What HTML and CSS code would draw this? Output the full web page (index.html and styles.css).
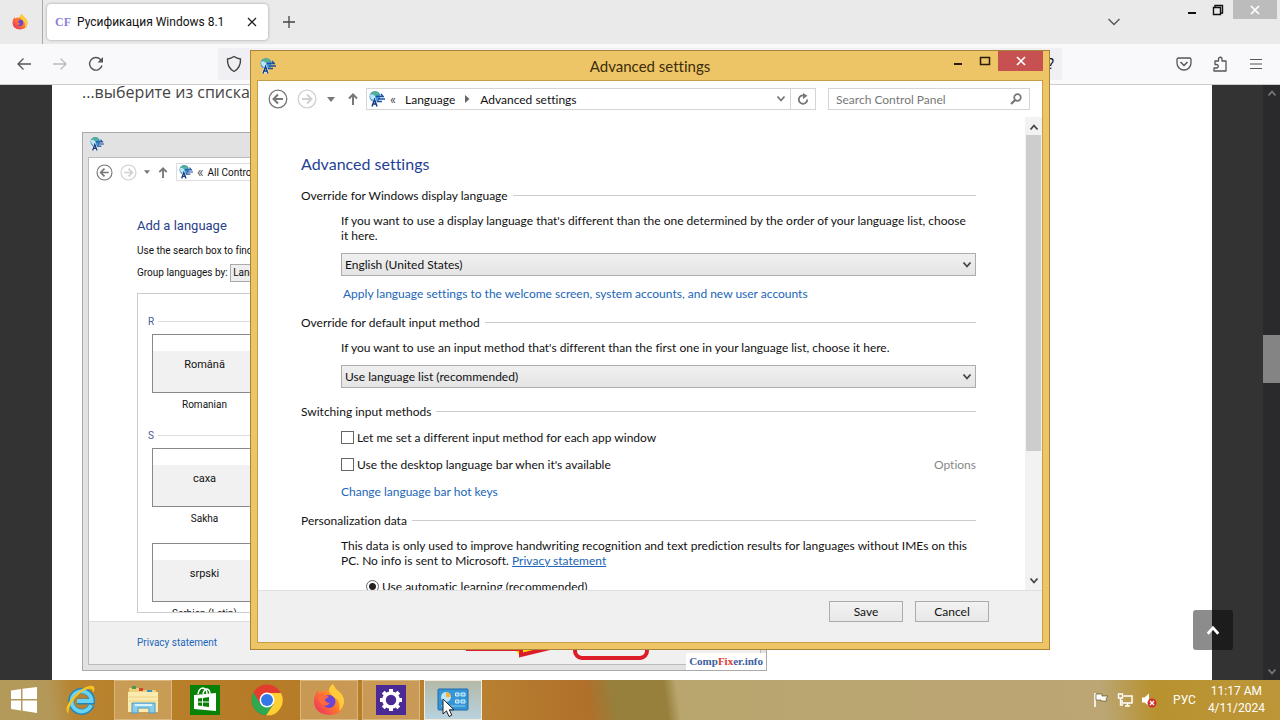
FILE: index.html
```html
<!DOCTYPE html>
<html lang="en">
<head>
  <meta charset="UTF-8">
  <title>Advanced settings</title>
  <link rel="stylesheet" href="styles.css">
</head>
<body>
  <!-- shared icons -->
  <svg class="sprite" aria-hidden="true">
    <symbol id="i-lang" viewBox="0 0 16 16">
      <circle cx="6" cy="5.500" r="5.500" fill="#3d9bd6"/>
      <path d="M2 2Q5 -.5 9 1L10 3 6 5 4 4Z" fill="#56b08c"/>
      <path d="M1 4Q3 2 6 5L4 9Q1 8 1 4Z" fill="#b9e6fb"/>
      <path d="M7 5.500h8M9 8h7M8 10.500h5M12 3l2 2.500" stroke="#1f4fa0" stroke-width="1.300" fill="none"/>
      <path d="M3 15.500L5.500 8.500L8 15.500M3.500 13H7.500" stroke="#fff" stroke-width="2.600" fill="none"/>
      <path d="M3 15.500L5.500 8.500L8 15.500M3.500 13H7.500" stroke="#163c7c" stroke-width="1.500" fill="none"/>
    </symbol>
    <symbol id="i-back" viewBox="0 0 20 20">
      <circle cx="10" cy="10" r="8.800" fill="none" stroke="currentColor" stroke-width="1.300"/>
      <path d="M15 10H6M10 5.500L5.500 10L10 14.500" fill="none" stroke="currentColor" stroke-width="2"/>
    </symbol>
    <symbol id="i-fwd" viewBox="0 0 20 20">
      <circle cx="10" cy="10" r="8.800" fill="none" stroke="currentColor" stroke-width="1.300"/>
      <path d="M5 10H14M10 5.500L14.500 10L10 14.500" fill="none" stroke="currentColor" stroke-width="2"/>
    </symbol>
    <symbol id="i-up" viewBox="0 0 12 14">
      <path d="M6 13V3M2 6.500L6 2.500L10 6.500" fill="none" stroke="currentColor" stroke-width="2"/>
    </symbol>
    <symbol id="i-drop" viewBox="0 0 8 5"><path d="M0 0H8L4 5Z" fill="currentColor"/></symbol>
    <symbol id="i-chev" viewBox="0 0 10 8"><path d="M1.500 1.500L5 5.500L8.500 1.500" fill="none" stroke="currentColor" stroke-width="1.800"/></symbol>
    <symbol id="i-chev-up" viewBox="0 0 10 8"><path d="M1.500 6.500L5 2.500L8.500 6.500" fill="none" stroke="currentColor" stroke-width="1.800"/></symbol>
    <symbol id="i-firefox" viewBox="0 0 32 32">
      <path d="M20 0Q22 4 24 6Q31 11 31 18Q30 31 16 31Q2 30 1 18Q1 11 5 6L6 9Q10 6 15 7Q16 3 20 0Z" fill="url(#ffg)"/>
      <path d="M20 0Q22 4 24 6Q31 11 31 18Q30 24 26 27Q28 20 24 15Q18 12 16 7Q16 3 20 0Z" fill="#ffcb3a"/>
      <circle cx="16" cy="17.500" r="6.500" fill="#6a46d6"/>
      <path d="M5 10Q10 9 16 13L12 15Q12 19 17 19Q13 24 8 20Q5 16 5 10Z" fill="#ff6a3a"/>
    </symbol>
    <linearGradient id="ffg" x1="1" y1="0" x2="0" y2="1">
      <stop offset="0" stop-color="#ffd43b"/><stop offset=".45" stop-color="#ff8427"/><stop offset="1" stop-color="#ee2468"/>
    </linearGradient>
  </svg>

  <div class="desktop">
    <div class="browser">
      <header class="tabbar">
        <button class="pinned" aria-label="Firefox View"><svg width="16" height="16"><use href="#i-firefox"/></svg></button>
        <div class="tab">
          <span class="favicon">CF</span>
          <span class="tab-title">Русификация Windows 8.1</span>
          <button class="tab-close" aria-label="Close tab"><svg width="10" height="10" viewBox="0 0 10 10"><path d="M1 1L9 9M9 1L1 9" stroke="#222" stroke-width="1.300"/></svg></button>
        </div>
        <button class="new-tab" aria-label="New tab"><svg width="12" height="12" viewBox="0 0 12 12"><path d="M6 0V12M0 6H12" stroke="#444" stroke-width="1.300"/></svg></button>
        <button class="all-tabs" aria-label="List all tabs"><svg width="14" height="8" viewBox="0 0 14 8"><path d="M1.500 1L7 6.500L12.500 1" fill="none" stroke="#555" stroke-width="1.400"/></svg></button>
        <div class="window-buttons">
          <button aria-label="Minimize"><svg width="10" height="12" viewBox="0 0 10 12"><path d="M1 9H9" stroke="#111" stroke-width="2"/></svg></button>
          <button aria-label="Restore"><svg width="12" height="12" viewBox="0 0 12 12"><path d="M3 3V1.500H10.500V9H9M1.500 3.500H8.500V10.500H1.500Z" fill="none" stroke="#111" stroke-width="1.400"/></svg></button>
          <button class="close" aria-label="Close"><svg width="10" height="10" viewBox="0 0 10 10"><path d="M1 1L9 9M9 1L1 9" stroke="#fff" stroke-width="1.700"/></svg></button>
        </div>
      </header>
      <nav class="toolbar">
        <button aria-label="Back"><svg width="16" height="14" viewBox="0 0 16 14"><path d="M15 7H2M7.500 1.500L2 7L7.500 12.500" fill="none" stroke="#555" stroke-width="1.300"/></svg></button>
        <button aria-label="Forward"><svg width="16" height="14" viewBox="0 0 16 14"><path d="M1 7H14M8.500 1.500L14 7L8.500 12.500" fill="none" stroke="#bbb" stroke-width="1.300"/></svg></button>
        <button aria-label="Reload"><svg width="16" height="16" viewBox="0 0 16 16"><path d="M14 9.500A6.300 6.300 0 1 1 12.500 3.500L14 5" fill="none" stroke="#555" stroke-width="1.400"/><path d="M15 1V6.500H9.500Z" fill="#555"/></svg></button>
        <div class="urlbar">
          <svg width="16" height="18" viewBox="0 0 16 18"><path d="M8 1.500Q11 3.500 14.500 4Q15 12.500 8 16.500Q1 12.500 1.500 4Q5 3.500 8 1.500Z" fill="none" stroke="#444" stroke-width="1.400"/></svg>
          <span>?</span>
        </div>
        <button aria-label="Pocket"><svg width="16" height="16" viewBox="0 0 16 16"><path d="M2.500 2H13.500Q15 2 15 3.500V7A7 7 0 0 1 1 7V3.500Q1 2 2.500 2Z" fill="none" stroke="#555" stroke-width="1.300"/><path d="M4.500 6L8 9.500L11.500 6" fill="none" stroke="#555" stroke-width="1.500"/></svg></button>
        <button aria-label="Extensions"><svg width="16" height="16" viewBox="0 0 16 16"><path d="M3 5H6.500V3A1.700 1.700 0 0 1 10 3V5H14V15H2V12H4.500A1.700 1.700 0 0 0 4.500 8.500H3Z" fill="none" stroke="#555" stroke-width="1.300" stroke-linejoin="round"/></svg></button>
        <button aria-label="Menu"><svg width="14" height="12" viewBox="0 0 14 12"><path d="M1 1.500H13M1 6H13M1 10.500H13" stroke="#555" stroke-width="1.200"/></svg></button>
      </nav>

      <div class="viewport">
        <main class="article">
          <p>...выберите из списка</p>
          <div class="shot">
            <div class="shot-title"><svg width="14" height="14"><use href="#i-lang"/></svg></div>
            <div class="shot-window">
              <div class="shot-nav">
                <svg class="dark" width="17" height="17"><use href="#i-back"/></svg>
                <svg class="light" width="17" height="17"><use href="#i-fwd"/></svg>
                <svg class="mid" width="6" height="4"><use href="#i-drop"/></svg>
                <svg class="mid" width="12" height="13"><use href="#i-up"/></svg>
                <div class="shot-path"><svg width="14" height="14"><use href="#i-lang"/></svg><span class="guil">«</span>All Control Panel Items</div>
              </div>
              <div class="shot-body">
                <h2>Add a language</h2>
                <p>Use the search box to find</p>
                <p>Group languages by: <span class="shot-select">Language</span></p>
                <div class="lang-list">
                  <div class="group">R</div>
                  <div class="tile">Română</div>
                  <div class="caption">Romanian</div>
                  <div class="group">S</div>
                  <div class="tile">саха</div>
                  <div class="caption">Sakha</div>
                  <div class="tile">srpski</div>
                  <div class="caption">Serbian (Latin)</div>
                </div>
              </div>
              <div class="shot-foot"><a href="#">Privacy statement</a></div>
            </div>
            <svg class="marks" width="190" height="20" viewBox="0 0 190 20">
              <path d="M44 -4H92L55 6Z" fill="#ffe000"/>
              <path d="M0 -1H55V5L88 -3" fill="none" stroke="#dc1d28" stroke-width="4"/>
              <rect x="109" y="-22" width="72" height="30" rx="7" fill="none" stroke="#dc1d28" stroke-width="4"/>
            </svg>
            <div class="watermark">Comp<b>Fix</b>er.info</div>
          </div>
        </main>
        <div class="page-scroll">
          <svg width="10" height="8"><use href="#i-chev-up"/></svg>
          <div class="page-thumb"></div>
          <svg width="10" height="8"><use href="#i-chev"/></svg>
        </div>
        <button class="to-top" aria-label="Back to top"><svg width="16" height="12"><use href="#i-chev-up"/></svg></button>
      </div>
    </div>

    <section class="dialog">
      <header class="dialog-title">
        <svg width="16" height="16"><use href="#i-lang"/></svg>
        <h1>Advanced settings</h1>
        <div class="dialog-buttons">
          <button aria-label="Minimize"><svg width="10" height="12" viewBox="0 0 10 12"><path d="M1 9H9" stroke="#2b1c05" stroke-width="2"/></svg></button>
          <button aria-label="Maximize"><svg width="12" height="12" viewBox="0 0 12 12"><path d="M1 2.500H11M1.500 2V9.500H10.500V2" fill="none" stroke="#2b1c05" stroke-width="1.500"/></svg></button>
          <button class="close" aria-label="Close"><svg width="10" height="10" viewBox="0 0 10 10"><path d="M1 1L9 9M9 1L1 9" stroke="#fff" stroke-width="1.700"/></svg></button>
        </div>
      </header>
      <div class="dialog-frame">
        <div class="dialog-nav">
          <button class="dark" aria-label="Back"><svg width="20" height="20"><use href="#i-back"/></svg></button>
          <button class="light" aria-label="Forward"><svg width="20" height="20"><use href="#i-fwd"/></svg></button>
          <button class="mid drop" aria-label="Recent"><svg width="8" height="5"><use href="#i-drop"/></svg></button>
          <button class="mid" aria-label="Up"><svg width="12" height="14"><use href="#i-up"/></svg></button>
          <div class="path">
            <svg width="16" height="16"><use href="#i-lang"/></svg>
            <span class="guil">«</span>
            <a href="#">Language</a>
            <svg class="sep" width="5" height="8" viewBox="0 0 5 8"><path d="M0 0L4.500 4L0 8Z" fill="#666"/></svg>
            <a href="#">Advanced settings</a>
            <svg class="path-drop mid" width="10" height="8"><use href="#i-chev"/></svg>
            <button class="refresh" aria-label="Refresh"><svg width="12" height="12" viewBox="0 0 12 12"><path d="M7 2.500A4.200 4.200 0 1 0 10.200 6.500" fill="none" stroke="#777" stroke-width="1.800"/><path d="M6 0L10.500 2.800L6 6Z" fill="#777"/></svg></button>
          </div>
          <label class="search">
            <input type="text" placeholder="Search Control Panel" aria-label="Search Control Panel">
            <svg width="12" height="12" viewBox="0 0 12 12"><circle cx="7.500" cy="4.500" r="3.300" fill="none" stroke="#777" stroke-width="1.700"/><path d="M5.300 6.900L1 11" stroke="#777" stroke-width="2.200"/></svg>
          </label>
        </div>
        <div class="dialog-scroll">
          <form class="settings">
            <h2>Advanced settings</h2>
            <h3>Override for Windows display language</h3>
            <p>If you want to use a display language that's different than the one determined by the order of your language list, choose it here.</p>
            <div class="select">
              <select aria-label="Display language"><option>English (United States)</option></select>
              <svg width="10" height="8"><use href="#i-chev"/></svg>
            </div>
            <a class="apply" href="#">Apply language settings to the welcome screen, system accounts, and new user accounts</a>
            <h3>Override for default input method</h3>
            <p>If you want to use an input method that's different than the first one in your language list, choose it here.</p>
            <div class="select">
              <select aria-label="Input method"><option>Use language list (recommended)</option></select>
              <svg width="10" height="8"><use href="#i-chev"/></svg>
            </div>
            <h3 class="switching">Switching input methods</h3>
            <div class="row"><label><input type="checkbox">Let me set a different input method for each app window</label></div>
            <div class="row"><label><input type="checkbox">Use the desktop language bar when it's available</label><span class="disabled">Options</span></div>
            <div class="row"><a href="#">Change language bar hot keys</a></div>
            <h3>Personalization data</h3>
            <p>This data is only used to improve handwriting recognition and text prediction results for languages without IMEs on this PC. No info is sent to Microsoft. <a class="under" href="#">Privacy statement</a></p>
            <div class="row radio"><label><input type="radio" checked>Use automatic learning (recommended)</label></div>
          </form>
          <div class="scrollbar">
            <svg width="10" height="8"><use href="#i-chev-up"/></svg>
            <div class="thumb"></div>
            <svg width="10" height="8"><use href="#i-chev"/></svg>
          </div>
        </div>
        <footer class="dialog-foot">
          <button>Save</button>
          <button>Cancel</button>
        </footer>
      </div>
    </section>

    <footer class="taskbar">
      <button class="task start" aria-label="Start"><svg width="28" height="28" viewBox="0 0 28 28"><path d="M1 4.500L11 3V13H1ZM12.500 2.800L27 1V13H12.500ZM1 14.500H11V24.500L1 23ZM12.500 14.500H27V27L12.500 24.800Z" fill="#fff"/></svg></button>
      <button class="task" aria-label="Internet Explorer"><svg width="32" height="32" viewBox="0 0 32 32">
        <path d="M26.500 21A10.500 10.500 0 1 1 27 15.500V17.500H12" fill="none" stroke="#2386b8" stroke-width="6"/>
        <path d="M26 21A10 10 0 1 1 26.500 15.500V17H12" fill="none" stroke="#69d3f3" stroke-width="4"/>
        <path d="M4 30Q-3 25 9 12Q21 0 28 2Q31 4 28 9Q28 4 23 5Q15 7 8 17Q2 26 4 30Z" fill="#f6c321"/>
      </svg></button>
      <button class="task open" aria-label="File Explorer"><svg width="32" height="32" viewBox="0 0 32 32">
        <path d="M2 4H12L14 6H29V26H2Z" fill="#edd078"/><path d="M5 2H9V5H5Z" fill="#459a55"/><path d="M12 4H16V7H12Z" fill="#d9442b"/><path d="M20 6H25V8H20Z" fill="#3c91cc"/>
        <path d="M1 8H31V28H1Z" fill="#fbebaf"/><path d="M2 13H30M2 17H30" stroke="#ead27f"/>
        <path d="M5 29V19H28V29H22V24H11V29Z" fill="#8ccbea" stroke="#4a9cc8"/><path d="M8 21H25" stroke="#d9f2fc" stroke-width="2"/>
      </svg></button>
      <button class="task" aria-label="Store"><svg width="30" height="30" viewBox="0 0 30 30">
        <path d="M0 0H30V30H0Z" fill="#078207"/><path d="M4 10L26 8V26L4 24Z" fill="#fff"/><path d="M8 9Q9 3 13 3Q17 4 17 9M13 9Q14 4 17 4Q20 5 20 9" fill="none" stroke="#fff" stroke-width="1.500"/>
        <path d="M8 13.500L12 13V16.500H8ZM13 12.900L19 12V16.500H13ZM8 17.500H12V21L8 20.600ZM13 17.500H19V22L13 21.200Z" fill="#078207"/>
      </svg></button>
      <button class="task" aria-label="Chrome"><svg width="32" height="32" viewBox="0 0 32 32">
        <circle cx="16" cy="16" r="15.500" fill="#e33b2e"/><path d="M2.600 8.300A15.500 15.500 0 0 0 15 31.500L22.700 19.900L16 16L9.300 19.900Z" fill="#2da94f"/><path d="M15 31.500A15.500 15.500 0 0 0 30 9H16L22.700 19.900Z" fill="#fdd033"/>
        <circle cx="16" cy="16" r="7.500" fill="#fff"/><circle cx="16" cy="16" r="6" fill="#3478e8"/>
      </svg></button>
      <button class="task open" aria-label="Firefox"><svg width="32" height="32"><use href="#i-firefox"/></svg></button>
      <button class="task open" aria-label="Settings"><svg width="30" height="30" viewBox="0 0 30 30">
        <path d="M0 0H30V30H0Z" fill="#4b2a96"/><circle cx="15" cy="15" r="7" fill="none" stroke="#fff" stroke-width="3.600"/>
        <path d="M15 4V8M15 22V26M4 15H8M22 15H26M7.200 7.200L10 10M20 20L22.800 22.800M22.800 7.200L20 10M10 20L7.200 22.800" stroke="#fff" stroke-width="4"/>
      </svg></button>
      <button class="task active" aria-label="Control Panel"><svg width="32" height="26" viewBox="0 0 32 26">
        <rect x="1" y="2" width="30" height="21" rx="1" fill="#3595d5" stroke="#1c6caa"/>
        <circle cx="9" cy="10" r="5" fill="#bfe4f7"/><path d="M9 10V5A5 5 0 0 1 14 10Z" fill="#f3b63c"/>
        <path d="M18.500 6H22V9H18.500ZM24 6H28V9H24ZM18.500 13H22V16H18.500ZM24 13H28V16H24Z" fill="#5bb4e8" stroke="#d9f0fc"/>
        <path d="M4 19H28" stroke="#8ccdf0" stroke-width="1"/>
      </svg></button>
      <div class="tray">
        <svg width="16" height="16" viewBox="0 0 16 16"><path d="M2 1V15" stroke="#fff" stroke-width="1.600"/><path d="M3 2H9V4H15L13 6.500L14 9H8V8H3Z" fill="#fff" stroke="#554016" stroke-width=".6"/></svg>
        <svg width="16" height="16" viewBox="0 0 16 16"><path d="M6.500 4H15V11H5V8M8 14H13M10.500 11V14" fill="none" stroke="#fff" stroke-width="1.500"/><path d="M1.500 2H5.500V6H1.500ZM3.500 6V13H6" fill="none" stroke="#fff" stroke-width="1.400"/></svg>
        <svg width="16" height="16" viewBox="0 0 16 16"><path d="M1 5.500H3.500L8 1.500V14L3.500 10.500H1Z" fill="#fff"/><circle cx="11" cy="11" r="4.500" fill="#d22f2f"/><path d="M9 9L13 13M13 9L9 13" stroke="#fff" stroke-width="1.400"/></svg>
        <span class="lang">РУС</span>
        <span class="clock">11:17 AM<br>4/11/2024</span>
      </div>
    </footer>

    <svg class="cursor" width="14" height="20" viewBox="0 0 14 20"><path d="M1 1V16L4.500 12.800L7 18.500L9.800 17.200L7.300 11.800H12Z" fill="#fff" stroke="#222"/></svg>
  </div>
</body>
</html>
```
FILE: styles.css
```css
* {
  box-sizing: border-box;
}
body {
  margin: 0;
  font-family: Roboto, "Open Sans", sans-serif;
  font-size: 12px;
  font-variant-ligatures: none;
  color: #111;
}
h1, h2, h3, p {
  margin: 0;
  font-weight: normal;
}
button {
  border: 0;
  padding: 0;
  background: none;
  font: inherit;
  color: inherit;
  display: flex;
  align-items: center;
  justify-content: center;
}
a {
  color: #2166b8;
  text-decoration: none;
}
svg {
  flex: none;
  display: block;
}
.sprite {
  position: absolute;
  width: 0;
  height: 0;
}
.dark {
  color: #777;
}
.mid {
  color: #777;
}
.light {
  color: #d0d0d0;
}

.desktop {
  position: relative;
  display: flex;
  flex-direction: column;
  height: 100vh;
  overflow: hidden;
}
.browser {
  flex: 1;
  min-height: 0;
  display: flex;
  flex-direction: column;
}

/* browser chrome */
.tabbar {
  display: flex;
  height: 44px;
  background: #eaeaea;
}
.pinned {
  width: 43px;
  padding-right: 3px;
  border-right: 1px solid #aaa;
}
.tab {
  display: flex;
  align-items: center;
  width: 221px;
  margin: 4px 0 4px 4px;
  padding: 0 11px 0 8px;
  border-radius: 4px;
  background: #fff;
  box-shadow: 0 0 3px #999;
}
.favicon {
  width: 22px;
  font-family: "Liberation Serif", serif;
  font-weight: bold;
  color: #8a83dc;
}
.tab-title {
  flex: 1;
  white-space: nowrap;
}
.new-tab {
  width: 42px;
}
.all-tabs {
  width: 40px;
  margin-left: auto;
}
.window-buttons {
  display: flex;
  align-items: flex-start;
  margin-left: 45px;
}
.window-buttons button {
  width: 26px;
  height: 19px;
}
.window-buttons .close {
  width: 44px;
  margin: 0 3px 0 2px;
  background: #bcbcbc;
}
.toolbar {
  display: flex;
  align-items: center;
  height: 41px;
  padding: 0 6px;
  background: #f9f9fb;
  border-bottom: 1px solid #ccc;
}
.toolbar button {
  width: 36px;
  height: 32px;
}
.urlbar {
  flex: 1;
  display: flex;
  align-items: center;
  justify-content: space-between;
  height: 32px;
  margin: 0 104px;
  padding: 0 8px;
  background: #f0f0f4;
  font-size: 14px;
}

/* web page */
.viewport {
  position: relative;
  flex: 1;
  min-height: 0;
  display: flex;
  overflow: hidden;
  background: #333;
}
.article {
  flex: 1;
  margin: 0 51px 0 52px;
  padding: 0 30px;
  background: #fff;
}
.article > p {
  height: 47px;
  font-family: "Open Sans", sans-serif;
  font-size: 16px;
  line-height: 14px;
  color: #444;
}
.shot {
  position: relative;
  width: 685px;
  height: 539px;
  padding: 0 5px 5px;
  border: 1px solid #aaa;
  background: #e2e2e2;
  display: flex;
  flex-direction: column;
  font-size: 10px;
}
.shot-title {
  height: 24px;
  padding: 4px 2px;
}
.shot-window {
  flex: 1;
  min-height: 0;
  display: flex;
  flex-direction: column;
  border: 1px solid #bbb;
  background: #fff;
}
.shot-nav {
  display: flex;
  align-items: center;
  gap: 7px;
  padding: 5px 7px;
}
.shot-path {
  flex: 1;
  display: flex;
  align-items: center;
  gap: 4px;
  height: 18px;
  padding: 0 2px;
  border: 1px solid #ddd;
}
.guil {
  color: #555;
  font-size: 14px;
  line-height: 14px;
}
.shot-body {
  flex: 1;
  min-height: 0;
  display: flex;
  flex-direction: column;
  padding: 31px 48px 8px;
}
.shot-body h2 {
  font-size: 13px;
  line-height: 18px;
  margin-bottom: 5px;
  color: #27408b;
}
.shot-body p {
  line-height: 22px;
}
.shot-select {
  display: inline-block;
  line-height: 16px;
  padding: 0 2px;
  border: 1px solid #aaa;
  background: #eee;
}
.lang-list {
  flex: 1;
  min-height: 0;
  margin-top: 9px;
  padding: 17px 10px 0;
  border: 1px solid #ccc;
  overflow: hidden;
}
.group {
  display: flex;
  align-items: center;
  gap: 4px;
  height: 20px;
  margin-bottom: 3px;
  color: #4a5a9a;
}
.group::after {
  content: "";
  flex: 1;
  border-top: 1px solid #ddd;
}
.tile {
  width: 105px;
  height: 59px;
  margin-left: 4px;
  border: 1px solid #888;
  background: linear-gradient(#fff 28%, #f1f1f1 29%);
  line-height: 60px;
  text-align: center;
  font-size: 11px;
}
.caption {
  width: 105px;
  height: 36px;
  margin-left: 4px;
  line-height: 23px;
  text-align: center;
}
.caption + .group {
  margin-top: -4px;
}
.shot-foot {
  height: 43px;
  padding: 15px 48px;
  border-top: 1px solid #ddd;
  background: #f0f0f0;
}
.marks {
  position: absolute;
  left: 383px;
  bottom: 0;
}
.watermark {
  position: absolute;
  right: 0;
  bottom: 0;
  padding: 0 3px;
  background: #fff;
  font-family: "Liberation Serif", serif;
  font-weight: bold;
  font-size: 11px;
  line-height: 17px;
  color: #3d5f9f;
}
.watermark b {
  color: #e0392f;
}
.page-scroll {
  width: 17px;
  display: flex;
  flex-direction: column;
  align-items: center;
  padding: 4px 0;
  background: #2a2a2c;
  color: #777;
}
.page-thumb {
  width: 17px;
  height: 48px;
  margin: 238px 0 auto;
  background: #848484;
}
.to-top {
  position: absolute;
  right: 47px;
  bottom: 30px;
  width: 40px;
  height: 40px;
  border-radius: 3px;
  background: rgba(0, 0, 0, 0.45);
  color: #fff;
}

/* dialog window */
.dialog {
  position: absolute;
  left: 250px;
  top: 50px;
  width: 800px;
  height: 600px;
  display: flex;
  flex-direction: column;
  padding: 0 6px 6px;
  border: 1px solid #a8833a;
  background: #edc566;
  font-family: Lato, "Open Sans", sans-serif;
}
.dialog-title {
  position: relative;
  display: flex;
  align-items: center;
  height: 29px;
  padding-left: 3px;
}
.dialog-title h1 {
  flex: 1;
  margin-right: 19px;
  text-align: center;
  font-size: 15px;
  color: #3c2c0c;
}
.dialog-buttons {
  position: absolute;
  top: 0;
  right: 0;
  display: flex;
}
.dialog-buttons button {
  width: 27px;
  height: 20px;
}
.dialog-buttons .close {
  width: 45px;
  background: #c75050;
}
.dialog-frame {
  flex: 1;
  min-height: 0;
  display: flex;
  flex-direction: column;
  border: 1px solid #c79d48;
  background: #fff;
}
.dialog-nav {
  display: flex;
  align-items: center;
  height: 36px;
  padding: 0 12px 0 10px;
}
.dialog-nav > button {
  margin-right: 9px;
}
.dialog-nav > .drop {
  margin: 0 12px 0 1px;
}
.dialog-nav > .path {
  margin-left: -2px;
}
.path {
  flex: 1;
  display: flex;
  align-items: center;
  height: 22px;
  padding-left: 2px;
  border: 1px solid #d5d5d5;
}
.path a {
  color: #111;
}
.path .guil {
  margin: 0 9px 0 5px;
}
.sep {
  margin: 0 10px;
}
.path-drop {
  margin-left: auto;
}
.refresh {
  width: 25px;
  height: 20px;
  margin-left: 4px;
  border-left: 1px solid #d5d5d5;
}
.search {
  display: flex;
  align-items: center;
  width: 202px;
  height: 22px;
  margin-left: 12px;
  padding: 0 7px;
  border: 1px solid #d5d5d5;
}
.search input {
  flex: 1;
  min-width: 0;
  border: 0;
  padding: 0;
  font: inherit;
}
.search input::placeholder {
  color: #777;
}
.dialog-scroll {
  flex: 1;
  min-height: 0;
  display: flex;
  overflow: hidden;
}
.settings {
  flex: 1;
  padding: 36px 49px 0 43px;
}
.settings h2 {
  margin-bottom: 12px;
  font-size: 16px;
  line-height: 22px;
  color: #1f3f94;
}
.settings h3 {
  display: flex;
  align-items: center;
  gap: 5px;
  height: 16px;
  margin-bottom: 10px;
  font-size: 12px;
}
.settings h3::after {
  content: "";
  flex: 1;
  border-top: 1px solid #ccc;
}
.settings p {
  margin-left: 40px;
  padding-right: 2px;
  line-height: 15px;
}
.select {
  position: relative;
  margin: 10px 0 9px 40px;
}
.select select {
  appearance: none;
  display: block;
  width: 100%;
  height: 23px;
  padding: 0 3px;
  border: 1px solid #acacac;
  border-radius: 0;
  background: linear-gradient(#f0f0f0, #e4e4e4);
  font: inherit;
  color: #111;
}
.select svg {
  position: absolute;
  right: 4px;
  top: 8px;
  color: #444;
}
.apply {
  display: block;
  margin: 0 0 12px 42px;
  line-height: 17px;
}
.settings .switching {
  margin-top: 15px;
}
.row {
  display: flex;
  align-items: center;
  height: 17px;
  margin: 0 0 10px 40px;
}
.row label {
  display: flex;
  align-items: center;
  gap: 3px;
}
.row input {
  appearance: none;
  width: 13px;
  height: 13px;
  margin: 0;
  border: 1px solid #666;
  background: #fff;
}
.row + h3 {
  margin-top: 12px;
}
.radio {
  margin: 10px 0 0 65px;
}
.radio input {
  border-radius: 50%;
  background: radial-gradient(#222 3px, #fff 4px);
}
.disabled {
  margin-left: auto;
  color: #888;
}
.under {
  text-decoration: underline;
}
.scrollbar {
  width: 17px;
  display: flex;
  flex-direction: column;
  align-items: center;
  padding: 6px 0 5px;
  background: #f2f2f2;
  color: #444;
}
.thumb {
  width: 15px;
  height: 316px;
  margin: 4px 0 auto;
  background: #cdcdcd;
}
.dialog-foot {
  display: flex;
  justify-content: flex-end;
  gap: 12px;
  height: 52px;
  padding: 10px 53px 0 0;
  border-top: 1px solid #dfdfdf;
  background: #f0f0f0;
}
.dialog-foot button {
  width: 74px;
  height: 21px;
  border: 1px solid #acacac;
  background: linear-gradient(#f2f2f2, #e8e8e8);
}

/* taskbar */
.taskbar {
  display: flex;
  height: 40px;
  background: linear-gradient(82deg, #b39a5a 0, #b3985a 4%, #b8842f 6%, #b67b26 20%, #b88030 38%, #b0702a 46%, #96803c 48%, #96803c 52%, #b9a66e 53%, #bba674 86%, #b8922f 90%, #bd9639 100%);
}
.task {
  width: 58px;
  margin-right: 4px;
  border: 1px solid transparent;
}
.start {
  width: 48px;
}
.open {
  border-color: #d9b67c;
  background: rgba(255, 240, 210, 0.25);
}
.active {
  border-color: #f3ead9;
  background: linear-gradient(#b5b9a6, #b8d2df);
}
.tray {
  display: flex;
  align-items: center;
  gap: 8px;
  margin-left: auto;
  padding-right: 15px;
  color: #fff;
}
.lang {
  margin: 0 4px 0 8px;
}
.clock {
  text-align: center;
  line-height: 17px;
}
.cursor {
  position: absolute;
  left: 442px;
  top: 698px;
}
```
